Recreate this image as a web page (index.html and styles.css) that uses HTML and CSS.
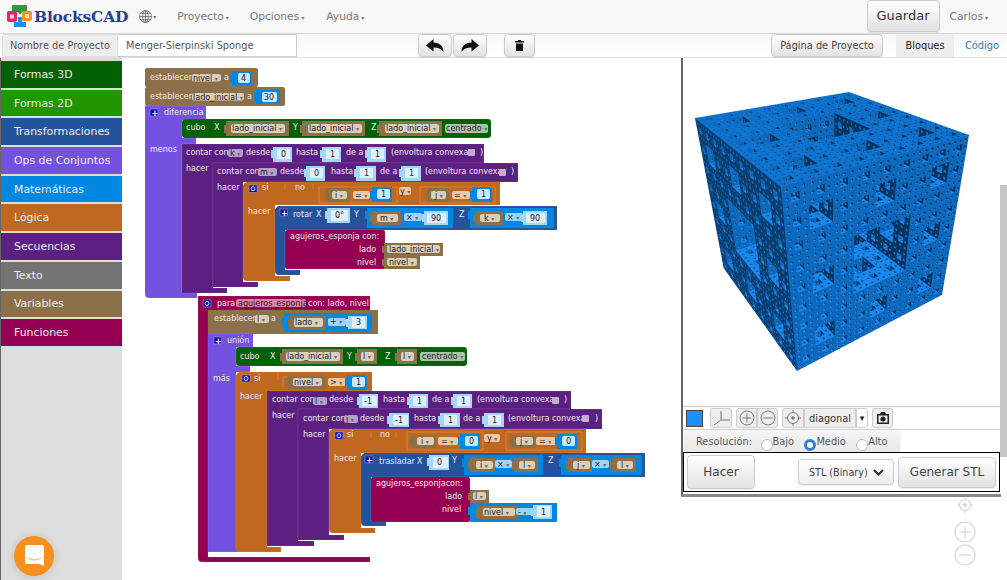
FILE: index.html
```html
<!DOCTYPE html>
<html lang="es">
<head>
<meta charset="utf-8">
<title>BlocksCAD</title>
<link rel="stylesheet" href="styles.css">
</head>
<body>
<div class="app">
  <header class="nav">
    <svg class="logo" width="27" height="24" viewBox="0 0 27 24">
      <path class="lg-g" d="M6 0H19a1 1 0 0 1 1 1V6a1 1 0 0 1-1 1H15L13 10 11 7H6a1 1 0 0 1-1-1V1a1 1 0 0 1 1-1Z"/>
      <path class="lg-b" d="M11 12h4v5h4v5H7v-5h4Z"/>
      <rect class="lg-p" x="0" y="6" width="10" height="11" rx="2"/>
      <rect class="lg-w" x="3" y="9.500" width="4" height="4"/>
      <rect class="lg-o" x="15" y="6" width="10" height="10" rx="2"/>
      <rect class="lg-w2" x="18" y="9" width="4" height="4"/>
    </svg>
    <span class="brand">BlocksCAD</span>
    <svg class="globe" width="13" height="13" viewBox="0 0 13 13">
      <circle cx="6.500" cy="6.500" r="6"/><ellipse cx="6.500" cy="6.500" rx="2.800" ry="6"/>
      <path d="M6.500 .5V12.500M.5 6.500H12.500M1.500 3.300H11.500M1.500 9.700H11.500"/>
    </svg>
    <span class="caret c-globe">▾</span>
    <span class="nav-link m-proy">Proyecto<span class="caret">▾</span></span>
    <span class="nav-link m-opc">Opciones<span class="caret">▾</span></span>
    <span class="nav-link m-ayu">Ayuda<span class="caret">▾</span></span>
    <button class="btn guardar">Guardar</button>
    <span class="nav-link m-car">Carlos<span class="caret">▾</span></span>
  </header>

  <div class="bar">
    <span class="addon">Nombre de Proyecto</span>
    <span class="name">Menger-Sierpinski Sponge</span>
    <button class="btn tool t-undo"><svg width="18" height="13" viewBox="0 0 18 13"><path d="M0 6.500 7.500 0V3.500C13.500 3.500 17.500 7 17.500 13 15.500 9.700 12 8.500 7.500 8.500V12.500Z"/></svg></button>
    <button class="btn tool t-redo"><svg class="flip" width="18" height="13" viewBox="0 0 18 13"><path d="M0 6.500 7.500 0V3.500C13.500 3.500 17.500 7 17.500 13 15.500 9.700 12 8.500 7.500 8.500V12.500Z"/></svg></button>
    <button class="btn tool t-trash"><svg width="9" height="11" viewBox="0 0 9 11"><path d="M3 0H6V1H9V2.500H0V1H3ZM1 3.500H8V11H1Z"/></svg></button>
    <button class="btn pagina">Página de Proyecto</button>
    <span class="tab active">Bloques</span>
    <span class="tab link">Código</span>
  </div>

  <main class="main">
    <nav class="toolbox">
      <div class="cat c3d">Formas 3D</div>
      <div class="cat c2d">Formas 2D</div>
      <div class="cat ctr">Transformaciones</div>
      <div class="cat cop">Ops de Conjuntos</div>
      <div class="cat cma">Matemáticas</div>
      <div class="cat clo">Lógica</div>
      <div class="cat cse">Secuencias</div>
      <div class="cat cte">Texto</div>
      <div class="cat cva">Variables</div>
      <div class="cat cfu">Funciones</div>
    </nav>

    <section class="workspace">
      <svg class="blocks" width="559" height="522" viewBox="122 58 559 522">
        <!-- top-level setters -->
        <rect class="fv" x="145" y="68" width="113" height="19" rx="2"/>
        <text class="t" x="150" y="80">establecer</text>
        <rect class="fd" x="192" y="74" width="29" height="7.500" rx="2"/><text class="k" x="193" y="80.500">nivel <tspan class="ar">▾</tspan></text>
        <text class="t" x="224" y="80">a</text>
        <rect class="fm" x="232" y="71" width="20" height="14"/><rect class="fn" x="238" y="73" width="12" height="10" rx="2"/><text class="k" x="241" y="81">4</text>

        <rect class="fv" x="145" y="87" width="140" height="19" rx="2"/>
        <text class="t" x="150" y="99">establecer</text>
        <rect class="fd" x="192" y="93" width="52" height="7.500" rx="2"/><text class="k" x="193" y="99.500">lado_inicial <tspan class="ar">▾</tspan></text>
        <text class="t" x="247" y="99">a</text>
        <rect class="fm" x="256" y="90" width="24" height="14"/><rect class="fn" x="262" y="92" width="15" height="10" rx="2"/><text class="k" x="264" y="100">30</text>

        <!-- diferencia -->
        <path class="fo" d="M145 106H206V120H182V138H196V144H182V293H197V298H149Q145 298 145 294Z"/>
        <rect class="ic" x="150" y="109" width="8" height="7"/><text class="ip" x="151.500" y="115.500">+</text>
        <text class="t" x="164" y="115">diferencia</text>
        <text class="t" x="150" y="152">menos</text>

        <rect class="f3" x="182" y="119" width="309" height="19" rx="3"/>
        <text class="t" x="186" y="130">cubo</text>
        <text class="t" x="214" y="130">X</text>
        <rect class="fv" x="226" y="121" width="63" height="15"/><rect class="fd" x="231" y="124" width="54" height="9" rx="2"/><text class="k" x="232" y="131">lado_inicial <tspan class="ar">▾</tspan></text>
        <text class="t" x="293" y="130">Y</text>
        <rect class="fv" x="302" y="121" width="63" height="15"/><rect class="fd" x="308" y="124" width="54" height="9" rx="2"/><text class="k" x="309" y="131">lado_inicial <tspan class="ar">▾</tspan></text>
        <text class="t" x="371" y="130">Z</text>
        <rect class="fv" x="379" y="121" width="63" height="15"/><rect class="fd" x="385" y="124" width="54" height="9" rx="2"/><text class="k" x="386" y="131">lado_inicial <tspan class="ar">▾</tspan></text>
        <rect class="fg" x="445" y="124" width="43" height="9" rx="2"/><text class="k" x="446" y="131">centrado <tspan class="ar">▾</tspan></text>

        <!-- contar k -->
        <path class="fs" d="M182 144H484V163H213V288H227V293H182Z"/>
        <text class="t" x="186" y="155">contar con</text>
        <rect class="fq" x="228" y="149" width="15" height="8" rx="2"/><text class="k" x="230" y="156">k <tspan class="ar">▾</tspan></text>
        <text class="t" x="246" y="155">desde</text>
        <rect class="fl" x="273" y="147" width="19" height="15"/><rect class="fw" x="277" y="149" width="13" height="10" rx="1"/><text class="k" x="281" y="157">0</text>
        <text class="t" x="296" y="155">hasta</text>
        <rect class="fl" x="322" y="147" width="19" height="15"/><rect class="fw" x="326" y="149" width="13" height="10" rx="1"/><text class="k" x="330" y="157">1</text>
        <text class="t" x="346" y="155">de a</text>
        <rect class="fl" x="367" y="147" width="19" height="15"/><rect class="fw" x="371" y="149" width="13" height="10" rx="1"/><text class="k" x="375" y="157">1</text>
        <text class="t" x="391" y="155">(envoltura convexa</text>
        <rect class="fc" x="468" y="149" width="7" height="7" rx="1"/><text class="t" x="480" y="155">)</text>
        <text class="t" x="186" y="171">hacer</text>

        <!-- contar m -->
        <path class="fs" d="M213 163H518V182H243V282H258V287H213Z"/>
        <text class="t" x="217" y="174">contar con</text>
        <rect class="fq" x="258" y="168" width="19" height="8" rx="2"/><text class="k" x="260" y="175">m <tspan class="ar">▾</tspan></text>
        <text class="t" x="280" y="174">desde</text>
        <rect class="fl" x="306" y="166" width="19" height="15"/><rect class="fw" x="310" y="168" width="13" height="10" rx="1"/><text class="k" x="314" y="176">0</text>
        <text class="t" x="331" y="174">hasta</text>
        <rect class="fl" x="356" y="166" width="20" height="15"/><rect class="fw" x="360" y="168" width="13" height="10" rx="1"/><text class="k" x="364" y="176">1</text>
        <text class="t" x="380" y="174">de a</text>
        <rect class="fl" x="401" y="166" width="20" height="15"/><rect class="fw" x="405" y="168" width="13" height="10" rx="1"/><text class="k" x="409" y="176">1</text>
        <text class="t" x="425" y="174">(envoltura convexa</text>
        <rect class="fc" x="499" y="169" width="7" height="7" rx="1"/><text class="t" x="511" y="174">)</text>
        <text class="t" x="217" y="190">hacer</text>

        <!-- si 1 -->
        <path class="fb" d="M246 182H500V205H275V276H290V281H247Q243 281 243 277V185Z"/>
        <rect class="ic" x="249" y="185" width="8" height="7.500"/><circle class="ig" cx="253" cy="188.700" r="2"/>
        <text class="t" x="262" y="190">si</text>
        <text class="t" x="295" y="190">no</text>
        <path class="ol" d="M285 184V189M313 184V189M319 203V187H397V203ZM420 203V187H495V203Z"/>
        <rect class="fv" x="327" y="188" width="23" height="14"/><rect class="fd" x="332" y="191" width="15" height="8" rx="2"/><text class="k" x="335" y="198">i <tspan class="ar">▾</tspan></text>
        <rect class="fe" x="353" y="191" width="17" height="8" rx="2"/><text class="k" x="355" y="198">= <tspan class="ar">▾</tspan></text>
        <rect class="fm" x="372" y="187" width="20" height="15"/><rect class="fn" x="377" y="189" width="13" height="10" rx="2"/><text class="k" x="381" y="197">1</text>
        <rect class="fe" x="399" y="187" width="12" height="8" rx="2"/><text class="k" x="400" y="194">y <tspan class="ar">▾</tspan></text>
        <rect class="fv" x="427" y="188" width="22" height="14"/><rect class="fd" x="431" y="191" width="15" height="8" rx="2"/><text class="k" x="435" y="198">j <tspan class="ar">▾</tspan></text>
        <rect class="fe" x="452" y="191" width="18" height="8" rx="2"/><text class="k" x="454" y="198">= <tspan class="ar">▾</tspan></text>
        <rect class="fm" x="472" y="187" width="20" height="15"/><rect class="fn" x="477" y="189" width="13" height="10" rx="2"/><text class="k" x="481" y="197">1</text>
        <text class="t" x="248" y="214">hacer</text>

        <!-- rotar -->
        <path class="fr" d="M278 206H557V230H285V270H300V275H279Q275 275 275 271V209Z"/>
        <rect class="ic" x="280" y="209" width="7.500" height="7"/><text class="ip" x="281" y="215.500">+</text>
        <text class="t" x="293" y="217">rotar</text>
        <text class="t" x="316" y="217">X</text>
        <rect class="fl" x="327" y="208" width="23" height="15"/><rect class="fw" x="331" y="210" width="17" height="11" rx="1"/><text class="k" x="335" y="218">0°</text>
        <text class="t" x="354" y="217">Y</text>
        <rect class="fm" x="367" y="208" width="86" height="20"/>
        <rect class="fv" x="372" y="211" width="29" height="14"/><rect class="fd" x="377" y="214" width="21" height="8" rx="2"/><text class="k" x="380" y="221">m <tspan class="ar">▾</tspan></text>
        <rect class="fi" x="404" y="213" width="18" height="8" rx="2"/><text class="k" x="406" y="220">× <tspan class="ar">▾</tspan></text>
        <rect class="fl" x="424" y="211" width="24" height="14"/><rect class="fw" x="427" y="213" width="19" height="10" rx="1"/><text class="k" x="431" y="221">90</text>
        <text class="t" x="459" y="217">Z</text>
        <rect class="fm" x="470" y="208" width="84" height="20"/>
        <rect class="fv" x="475" y="211" width="28" height="14"/><rect class="fd" x="480" y="214" width="20" height="8" rx="2"/><text class="k" x="484" y="221">k <tspan class="ar">▾</tspan></text>
        <rect class="fi" x="505" y="213" width="18" height="8" rx="2"/><text class="k" x="507" y="220">× <tspan class="ar">▾</tspan></text>
        <rect class="fl" x="523" y="211" width="24" height="14"/><rect class="fw" x="526" y="213" width="19" height="10" rx="1"/><text class="k" x="530" y="221">90</text>

        <!-- llamada 1 -->
        <rect class="ff" x="285" y="230" width="100" height="39" rx="2"/>
        <text class="t" x="290" y="239">agujeros_esponja con:</text>
        <text class="t" x="359" y="252">lado</text>
        <text class="t" x="357" y="265">nivel</text>
        <rect class="fv" x="384" y="243" width="59" height="13"/><rect class="fd" x="387" y="245" width="53" height="8" rx="2"/><text class="k" x="389" y="252">lado_inicial <tspan class="ar">▾</tspan></text>
        <rect class="fv" x="384" y="256" width="36" height="13"/><rect class="fd" x="387" y="258" width="30" height="8" rx="2"/><text class="k" x="389" y="265">nivel <tspan class="ar">▾</tspan></text>

        <!-- para -->
        <path class="ff" d="M198 296H370V310H208V557H370V562H202Q198 562 198 558Z"/>
        <rect class="ic" x="203" y="300" width="8" height="7"/><circle class="ig" cx="207" cy="303.500" r="2"/>
        <text class="t" x="217" y="306">para</text>
        <rect class="fh" x="236" y="299" width="70" height="8" rx="2"/><text class="k" x="238" y="306">agujeros_esponja</text>
        <text class="t" x="308" y="306">con: lado, nivel</text>

        <rect class="fv" x="208" y="310" width="170" height="24"/>
        <text class="t" x="214" y="321">establecer</text>
        <rect class="fd" x="255" y="315" width="14" height="8" rx="2"/><text class="k" x="257" y="322">l <tspan class="ar">▾</tspan></text>
        <text class="t" x="271" y="321">a</text>
        <rect class="fm" x="284" y="313" width="88" height="19"/>
        <rect class="fv" x="290" y="316" width="36" height="14"/><rect class="fd" x="294" y="318" width="29" height="9" rx="2"/><text class="k" x="295" y="325">lado <tspan class="ar">▾</tspan></text>
        <rect class="fi" x="328" y="318" width="18" height="8" rx="2"/><text class="k" x="330" y="324">+ <tspan class="ar">▾</tspan></text>
        <rect class="fl" x="348" y="316" width="19" height="13"/><rect class="fw" x="352" y="317" width="13" height="11" rx="1"/><text class="k" x="356" y="325">3</text>

        <!-- union -->
        <path class="fo" d="M208 334H253V347H236V366H250V372H236V547H253V552H208Z"/>
        <rect class="ic" x="214" y="337" width="7.500" height="7"/><text class="ip" x="215" y="343.500">+</text>
        <text class="t" x="227" y="343">unión</text>
        <text class="t" x="213" y="381">más</text>

        <rect class="f3" x="236" y="347" width="231" height="19" rx="3"/>
        <text class="t" x="240" y="359">cubo</text>
        <text class="t" x="270" y="359">X</text>
        <rect class="fv" x="282" y="349" width="61" height="15"/><rect class="fd" x="286" y="352" width="54" height="9" rx="2"/><text class="k" x="287" y="359">lado_inicial <tspan class="ar">▾</tspan></text>
        <text class="t" x="347" y="359">Y</text>
        <rect class="fv" x="357" y="349" width="20" height="15"/><rect class="fd" x="361" y="352" width="13" height="9" rx="2"/><text class="k" x="363" y="359">l <tspan class="ar">▾</tspan></text>
        <text class="t" x="385" y="359">Z</text>
        <rect class="fv" x="397" y="349" width="20" height="15"/><rect class="fd" x="401" y="352" width="13" height="9" rx="2"/><text class="k" x="403" y="359">l <tspan class="ar">▾</tspan></text>
        <rect class="fg" x="420" y="352" width="45" height="9" rx="2"/><text class="k" x="422" y="359">centrado <tspan class="ar">▾</tspan></text>

        <!-- si 2 -->
        <path class="fb" d="M239 372H372V392H267V547H281V552H240Q236 552 236 548V375Z"/>
        <rect class="ic" x="242" y="375" width="8" height="7"/><circle class="ig" cx="246" cy="378.500" r="2"/>
        <text class="t" x="254" y="381">si</text>
        <path class="ol" d="M278 374V380M283 388V377H287"/>
        <rect class="fv" x="288" y="375" width="37" height="14"/><rect class="fd" x="293" y="378" width="29" height="8" rx="2"/><text class="k" x="294" y="385">nivel <tspan class="ar">▾</tspan></text>
        <rect class="fe" x="328" y="378" width="18" height="8" rx="2"/><text class="k" x="330" y="385">&gt; <tspan class="ar">▾</tspan></text>
        <rect class="fm" x="347" y="375" width="20" height="15"/><rect class="fn" x="352" y="377" width="13" height="10" rx="2"/><text class="k" x="356" y="385">1</text>
        <text class="t" x="240" y="399">hacer</text>

        <!-- contar l -->
        <path class="fs" d="M267 391H571V409H298V541H314V546H267Z"/>
        <text class="t" x="272" y="402">contar con</text>
        <rect class="fq" x="313" y="397" width="14" height="8" rx="2"/><text class="k" x="315" y="404">l <tspan class="ar">▾</tspan></text>
        <text class="t" x="329" y="402">desde</text>
        <rect class="fl" x="359" y="394" width="19" height="14"/><rect class="fw" x="362" y="396" width="15" height="10" rx="1"/><text class="k" x="364" y="404">-1</text>
        <text class="t" x="383" y="402">hasta</text>
        <rect class="fl" x="409" y="394" width="19" height="14"/><rect class="fw" x="413" y="396" width="13" height="10" rx="1"/><text class="k" x="417" y="404">1</text>
        <text class="t" x="432" y="402">de a</text>
        <rect class="fl" x="453" y="394" width="19" height="14"/><rect class="fw" x="457" y="396" width="13" height="10" rx="1"/><text class="k" x="461" y="404">1</text>
        <text class="t" x="477" y="402">(envoltura convexa</text>
        <rect class="fc" x="552" y="397" width="7" height="7" rx="1"/><text class="t" x="564" y="402">)</text>
        <text class="t" x="272" y="418">hacer</text>

        <!-- contar j -->
        <path class="fs" d="M298 409H602V429H329V535H344V540H298Z"/>
        <text class="t" x="303" y="421">contar con</text>
        <rect class="fq" x="344" y="415" width="14" height="8" rx="2"/><text class="k" x="346" y="422">j <tspan class="ar">▾</tspan></text>
        <text class="t" x="360" y="421">desde</text>
        <rect class="fl" x="389" y="413" width="20" height="14"/><rect class="fw" x="393" y="415" width="15" height="10" rx="1"/><text class="k" x="395" y="423">-1</text>
        <text class="t" x="414" y="421">hasta</text>
        <rect class="fl" x="440" y="413" width="20" height="14"/><rect class="fw" x="444" y="415" width="13" height="10" rx="1"/><text class="k" x="448" y="423">1</text>
        <text class="t" x="463" y="421">de a</text>
        <rect class="fl" x="484" y="413" width="20" height="14"/><rect class="fw" x="488" y="415" width="13" height="10" rx="1"/><text class="k" x="492" y="423">1</text>
        <text class="t" x="508" y="421">(envoltura convexa</text>
        <rect class="fc" x="582" y="415" width="7" height="7" rx="1"/><text class="t" x="595" y="421">)</text>
        <text class="t" x="303" y="437">hacer</text>

        <!-- si 3 -->
        <path class="fb" d="M332 429H586V453H361V528H375V533H333Q329 533 329 529V432Z"/>
        <rect class="ic" x="335" y="432" width="8" height="7.500"/><circle class="ig" cx="339" cy="435.700" r="2"/>
        <text class="t" x="347" y="437">si</text>
        <text class="t" x="380" y="437">no</text>
        <path class="ol" d="M371 432V438M396 432V438M407 450V432H483V450ZM506 450V432H582V450Z"/>
        <rect class="fv" x="412" y="435" width="24" height="13"/><rect class="fd" x="417" y="437" width="17" height="8" rx="2"/><text class="k" x="421" y="444">i <tspan class="ar">▾</tspan></text>
        <rect class="fe" x="438" y="437" width="20" height="8" rx="2"/><text class="k" x="441" y="444">= <tspan class="ar">▾</tspan></text>
        <rect class="fm" x="460" y="434" width="20" height="15"/><rect class="fn" x="465" y="436" width="13" height="10" rx="2"/><text class="k" x="469" y="444">0</text>
        <rect class="fe" x="484" y="434" width="16" height="8" rx="2"/><text class="k" x="487" y="441">y <tspan class="ar">▾</tspan></text>
        <rect class="fv" x="511" y="435" width="24" height="13"/><rect class="fd" x="516" y="437" width="17" height="8" rx="2"/><text class="k" x="520" y="444">j <tspan class="ar">▾</tspan></text>
        <rect class="fe" x="536" y="437" width="20" height="8" rx="2"/><text class="k" x="539" y="444">= <tspan class="ar">▾</tspan></text>
        <rect class="fm" x="557" y="434" width="20" height="15"/><rect class="fn" x="562" y="436" width="13" height="10" rx="2"/><text class="k" x="566" y="444">0</text>
        <text class="t" x="334" y="461">hacer</text>

        <!-- trasladar -->
        <path class="fr" d="M364 453H645V477H371V521H386V526H365Q361 526 361 522V456Z"/>
        <rect class="ic" x="365" y="456" width="8" height="7"/><text class="ip" x="366" y="462.500">+</text>
        <text class="t" x="379" y="464">trasladar</text>
        <text class="t" x="417" y="464">X</text>
        <rect class="fl" x="429" y="455" width="20" height="15"/><rect class="fw" x="433" y="457" width="15" height="11" rx="1"/><text class="k" x="437" y="465">0</text>
        <text class="t" x="452" y="463">Y</text>
        <rect class="fm" x="464" y="455" width="79" height="20"/>
        <rect class="fv" x="470" y="458" width="25" height="14"/><rect class="fd" x="476" y="461" width="17" height="8" rx="2"/><text class="k" x="480" y="468">i <tspan class="ar">▾</tspan></text>
        <rect class="fi" x="495" y="460" width="17" height="8" rx="2"/><text class="k" x="497" y="467">× <tspan class="ar">▾</tspan></text>
        <rect class="fv" x="514" y="458" width="24" height="14"/><rect class="fd" x="519" y="461" width="16" height="8" rx="2"/><text class="k" x="523" y="468">l <tspan class="ar">▾</tspan></text>
        <text class="t" x="548" y="463">Z</text>
        <rect class="fm" x="561" y="455" width="81" height="20"/>
        <rect class="fv" x="568" y="458" width="24" height="14"/><rect class="fd" x="573" y="461" width="17" height="8" rx="2"/><text class="k" x="577" y="468">j <tspan class="ar">▾</tspan></text>
        <rect class="fi" x="592" y="460" width="17" height="8" rx="2"/><text class="k" x="594" y="467">× <tspan class="ar">▾</tspan></text>
        <rect class="fv" x="612" y="458" width="24" height="14"/><rect class="fd" x="617" y="461" width="16" height="8" rx="2"/><text class="k" x="621" y="468">l <tspan class="ar">▾</tspan></text>

        <!-- llamada 2 -->
        <rect class="ff" x="371" y="477" width="99" height="45" rx="2"/>
        <text class="t" x="376" y="486">agujeros_esponjacon:</text>
        <text class="t" x="445" y="499">lado</text>
        <text class="t" x="442" y="512">nivel</text>
        <rect class="fv" x="470" y="490" width="19" height="13"/><rect class="fd" x="473" y="492" width="13" height="8" rx="2"/><text class="k" x="475" y="499">l <tspan class="ar">▾</tspan></text>
        <rect class="fm" x="470" y="503" width="87" height="19"/>
        <rect class="fv" x="477" y="506" width="41" height="13"/><rect class="fd" x="483" y="508" width="32" height="8" rx="2"/><text class="k" x="484" y="515">nivel <tspan class="ar">▾</tspan></text>
        <rect class="fi" x="516" y="508" width="17" height="7" rx="2"/><text class="k" x="518" y="515">- <tspan class="ar">▾</tspan></text>
        <rect class="fl" x="533" y="505" width="19" height="14"/><rect class="fw" x="537" y="506" width="13" height="11" rx="1"/><text class="k" x="541" y="515">1</text>

        <!-- puzzle tabs on the value connections -->
        <path class="tl" d="M271 150h2v8h-2zM320 150h2v8h-2zM365 150h2v8h-2zM304 169h2v8h-2zM354 169h2v8h-2zM399 169h2v8h-2zM325 211h2v8h-2zM422 214h2v8h-2zM521 214h2v8h-2zM346 319h2v8h-2zM357 397h2v8h-2zM407 397h2v8h-2zM451 397h2v8h-2zM387 416h2v8h-2zM438 416h2v8h-2zM482 416h2v8h-2zM427 458h2v8h-2zM531 508h2v8h-2z"/>
        <path class="tm" d="M230 74h2v8h-2zM254 93h2v8h-2zM370 191h2v8h-2zM470 191h2v8h-2zM365 211h2v8h-2zM468 211h2v8h-2zM282 318h2v8h-2zM345 378h2v8h-2zM458 437h2v8h-2zM555 437h2v8h-2zM462 459h2v8h-2zM559 459h2v8h-2zM468 507h2v8h-2z"/>
        <path class="tv" d="M224 125h2v8h-2zM300 125h2v8h-2zM377 125h2v8h-2zM325 191h2v8h-2zM425 191h2v8h-2zM370 214h2v8h-2zM473 214h2v8h-2zM288 319h2v8h-2zM280 353h2v8h-2zM355 353h2v8h-2zM395 353h2v8h-2zM286 378h2v8h-2zM410 438h2v8h-2zM509 438h2v8h-2zM468 461h2v8h-2zM512 461h2v8h-2zM566 461h2v8h-2zM610 461h2v8h-2zM475 509h2v8h-2zM382 246h2v7h-2zM382 259h2v7h-2zM468 493h2v7h-2z"/>
      </svg>
    </section>

    <aside class="side">
      <div class="panel">
        <canvas id="sponge" class="view" width="317" height="348"></canvas>
        <div class="vtools">
          <span class="swatch"></span>
          <button class="vb axes"><svg width="20" height="17" viewBox="0 0 20 17"><path d="M10 1V10L3 15M10 10H19"/></svg></button>
          <button class="vb plus lj"><svg width="16" height="16" viewBox="0 0 16 16"><circle cx="8" cy="8" r="7"/><path d="M8 3.500V12.500M3.500 8H12.500"/></svg></button>
          <button class="vb plus rj"><svg width="16" height="16" viewBox="0 0 16 16"><circle cx="8" cy="8" r="7"/><path d="M3.500 8H12.500"/></svg></button>
          <button class="vb aim lj"><svg width="16" height="16" viewBox="0 0 16 16"><circle cx="8" cy="8" r="5.500"/><circle class="dot" cx="8" cy="8" r="1.800"/><path d="M8 0V2.500M8 13.500V16M0 8H2.500M13.500 8H16"/></svg></button>
          <button class="vb diag mj">diagonal</button>
          <button class="vb drop rj"><span class="caret dark">▾</span></button>
          <button class="vb cam"><svg width="14" height="14" viewBox="0 0 14 14"><path class="solid" d="M1 3H4L5 1H9L10 3H13V13H1ZM2.500 4.500V11.500H11.500V4.500Z"/><circle class="solid" cx="7" cy="8" r="2.600"/></svg></button>
        </div>
        <div class="res">
          <span class="res-l">Resolución:</span>
          <span class="radio"></span><span class="res-o o-b">Bajo</span>
          <span class="radio on"></span><span class="res-o o-m">Medio</span>
          <span class="radio"></span><span class="res-o">Alto</span>
        </div>
        <div class="actions">
          <button class="btn hacer">Hacer</button>
          <div class="btn select">STL (Binary)<svg width="11" height="7" viewBox="0 0 11 7"><path d="M1 1 5.500 5.500 10 1"/></svg></div>
          <button class="btn generar">Generar STL</button>
        </div>
      </div>
      <div class="scroll"></div>
      <div class="viewctl">
        <svg class="c-aim" width="16" height="16" viewBox="0 0 16 16"><circle cx="8" cy="8" r="5.500"/><circle class="dot" cx="8" cy="8" r="2"/><path d="M8 0V2.500M8 13.500V16M0 8H2.500M13.500 8H16"/></svg>
        <svg class="c-zo" width="22" height="22" viewBox="0 0 22 22"><circle cx="11" cy="11" r="10"/><path d="M5 11H17M11 5V17"/></svg>
        <svg class="c-zo2" width="22" height="22" viewBox="0 0 22 22"><circle cx="11" cy="11" r="10"/><path d="M5 11H17"/></svg>
      </div>
    </aside>
  </main>

  <div class="launcher">
    <svg width="19" height="22" viewBox="0 0 19 22"><path class="chat" d="M2 0H17a2 2 0 0 1 2 2V21L14 19H2a2 2 0 0 1-2-2V2a2 2 0 0 1 2-2Z"/><path class="smile" d="M3 13Q9.500 17 16 13"/></svg>
  </div>
</div>
<script src="sponge.js"></script>
</body>
</html>
```

FILE: styles.css
```css
* { box-sizing: border-box; }
html, body { margin: 0; padding: 0; }
body { font-family: "DejaVu Sans", sans-serif; background: #fff; }
.app { position: relative; width: 1007px; height: 580px; overflow: hidden; display: flex; flex-direction: column; }

.nav { height: 34px; flex: none; display: flex; align-items: center; background: #f8f8f8; border-bottom: 1px solid #d8d8d8; }
.logo { margin: 0 0 0 7px; flex: none; }
.lg-g { fill: #2f9a3c; } .lg-b { fill: #1e90e6; } .lg-p { fill: #e6246e; } .lg-o { fill: #f7941e; }
.lg-w { fill: #fbd3e2; } .lg-w2 { fill: #fde0b8; }
.brand { font-family: "DejaVu Serif", serif; font-weight: 700; font-size: 15.500px; color: #26408f; margin-left: 0; letter-spacing: -.2px; }
.globe { margin-left: 11px; flex: none; }
.globe circle, .globe ellipse, .globe path { fill: none; stroke: #666; stroke-width: .8; }
.caret { font-size: 6px; margin-left: 2px; color: #777; }
.caret.dark { color: #222; font-size: 9px; margin: 0; }
.c-globe { margin-left: 1px; }
.nav-link { font-size: 10.700px; color: #777; }
.m-proy { margin-left: 21px; } .m-opc { margin-left: 21px; } .m-ayu { margin-left: 22px; }
.m-car { margin-left: 10px; margin-right: 19px; }
.btn { font-family: inherit; background: linear-gradient(#fff, #e2e2e2); border: 1px solid #ccc; border-radius: 4px; color: #333; padding: 0; box-shadow: 0 1px 1px rgba(0,0,0,.08); }
.guardar { width: 73px; height: 32px; margin: -2px 0 0 auto; font-size: 13px; }

.bar { height: 24px; flex: none; display: flex; align-items: stretch; background: linear-gradient(#f8f8f8, #fff); border-bottom: 1px solid #ddd; font-size: 10px; color: #555; padding-left: 2px; }
.addon { width: 116px; background: #eee; border: 1px solid #ddd; border-radius: 3px 0 0 3px; display: flex; align-items: center; padding-left: 7px; font-size: 9.800px; color: #555; }
.name { width: 179px; background: #fff; border: 1px solid #ccc; border-left: 0; display: flex; align-items: center; padding-left: 8px; font-size: 9.800px; color: #555; }
.tool { display: flex; align-items: center; justify-content: center; height: 23px; }
.tool path { fill: #111; }
.t-undo { width: 34px; margin-left: 121px; }
.t-redo { width: 34px; margin-left: 1px; }
.t-trash { width: 31px; margin-left: 17px; }
.flip { transform: scaleX(-1); }
.pagina { width: 112px; margin-left: 236px; height: 23px; font-size: 9.800px; color: #444; }
.tab { display: flex; align-items: center; justify-content: center; font-size: 9.800px; height: 23px; }
.tab.active { width: 58px; margin-left: 13px; background: #eee; color: #222; }
.tab.link { width: 46px; margin-left: 5px; color: #337ab7; }

.main { flex: 1; min-height: 0; display: flex; }
.toolbox { width: 122px; flex: none; background: #ddd; border-left: 1px solid #666; padding-top: 3px; display: flex; flex-direction: column; gap: 2px; }
.cat { height: 26.700px; display: flex; align-items: center; padding-left: 13px; color: #eee; font-size: 10.900px; }
.c3d { background: #006205; } .c2d { background: #219600; } .ctr { background: #24529b; } .cop { background: #7452e0; }
.cma { background: #0087e0; } .clo { background: #c06820; } .cse { background: #5b2082; } .cte { background: #737373; }
.cva { background: #8b7049; } .cfu { background: #950052; }

.workspace { width: 559px; flex: none; background: #fff; position: relative; }
.blocks { display: block; overflow: visible; font-family: "DejaVu Sans", sans-serif; }
.t { font-size: 8px; fill: #f0e8f0; }
.k { font-size: 8px; fill: #222; }
.ar { font-size: 6px; fill: #666; }
.ip { font-size: 8px; font-weight: 700; fill: #fff; }
.ic { fill: #10109a; stroke: #a8a8ee; stroke-width: .5; }
.ig { fill: none; stroke: #e0e0ff; stroke-width: 1; }
.ol { fill: none; stroke: #d9974f; stroke-width: .6; }
.fv { fill: #8b7049; } .fo { fill: #7452e0; } .f3 { fill: #006205; } .fs { fill: #5b2082; } .fb { fill: #c06820; }
.fr { fill: #24529b; } .ff { fill: #950052; } .fm { fill: #0087e0; }
.f3, .fs, .fb, .fr, .ff, .fo { stroke: rgba(255,255,255,.12); stroke-width: .7; }
.fd { fill: #d9cdbb; } .fn { fill: #cfe7fa; } .fg { fill: #a6c5a8; } .fq { fill: #b69fc8; }
.fl { fill: #a6d6f6; } .fw { fill: #dff0fc; } .fc { fill: #c3aed0; } .fe { fill: #eec7a0; } .fi { fill: #9ed3f5; } .fh { fill: #cc88ac; }
.tl { fill: #a6d6f6; } .tm { fill: #0087e0; } .tv { fill: #8b7049; }

.side { position: relative; width: 326px; flex: none; display: flex; flex-direction: column; }
.panel { width: 320px; border-left: 2px solid #666; border-bottom: 3px solid #888; display: flex; flex-direction: column; }
.view { display: block; width: 317px; height: 348px; }
.vtools { height: 24px; border-top: 1px solid #ccc; border-bottom: 1px solid #ccc; display: flex; align-items: center; padding-left: 3px; }
.swatch { width: 17px; height: 17px; background: #1b8ffa; border: 1px solid #444; }
.vb { height: 20px; padding: 0; background: #eee; border: 1px solid #ccc; border-radius: 3px; display: flex; align-items: center; justify-content: center; font-family: inherit; font-size: 9.800px; color: #333; }
.vb svg { fill: none; stroke: #777; stroke-width: 1; }
.vb .dot { fill: #777; stroke: none; }
.vb .solid { fill: #222; stroke: none; }
.axes { width: 22px; margin-left: 7px; }
.plus { width: 21px; }
.lj { border-radius: 3px 0 0 3px; } .rj { border-radius: 0 3px 3px 0; } .mj { border-radius: 0; }
.plus.lj { margin-left: 4px; }
.aim { width: 22px; margin-left: 4px; }
.diag { width: 52px; }
.drop { width: 12px; background: #fff; }
.cam { width: 21px; margin-left: 4px; }
.res { width: 216px; height: 21px; margin: 1px 0 0 1px; background: linear-gradient(#f4f4f4, #e9e9e9); border-radius: 3px 3px 0 0; box-shadow: 0 0 1px rgba(0,0,0,.3); display: flex; align-items: flex-start; padding: 5px 0 0 12px; font-size: 9.800px; color: #555; position: relative; z-index: 1; }
.res-l { width: 65px; }
.radio { width: 12px; height: 12px; border-radius: 50%; background: #fff; border: 1px solid #bbb; margin-top: 3px; flex: none; }
.radio.on { background: #fff; border: 3.500px solid #337ecb; }
.res-o { width: 32px; }
.res-o.o-m { width: 40px; }
.actions { height: 40px; width: 317px; margin-bottom: 2px; border: 1px solid #000; display: flex; align-items: center; padding-left: 3px; }
.hacer { width: 68px; height: 34px; font-size: 12px; color: #444; }
.select { width: 96px; height: 26px; margin-left: 43px; display: flex; align-items: center; justify-content: space-between; padding: 0 9px 0 10px; font-size: 9.600px; color: #444; background: linear-gradient(#fff, #eee); }
.select svg { fill: none; stroke: #333; stroke-width: 2; }
.generar { width: 98px; height: 31px; margin-left: 4px; font-size: 12px; color: #444; }
.scroll { position: absolute; right: 0; top: 127px; width: 7px; height: 272px; background: #c6c6c6; }
.viewctl { display: flex; flex-direction: column; align-items: center; width: 22px; margin-left: 273px; }
.viewctl svg { fill: none; stroke: #d4d4d4; stroke-width: 1.200; display: block; }
.viewctl .dot { fill: #d4d4d4; stroke: none; }
.c-zo { margin-top: 8px; }
.c-zo2 { margin-top: 1px; }

.launcher { position: absolute; left: 14px; top: 536px; width: 40px; height: 40px; border-radius: 50%; background: #f7901e; box-shadow: 0 1px 10px rgba(0,0,0,.12); display: flex; align-items: center; justify-content: center; }
.chat { fill: #fff; }
.smile { fill: none; stroke: #f7a860; stroke-width: 1; }
```

FILE: sponge.js
```js
// Renders the level-4 Menger sponge preview by casting rays through a voxel grid.
(function () {
  var canvas = document.getElementById('sponge');
  var ctx = canvas.getContext('2d');
  var W = canvas.width, H = canvas.height, OX = 683, OY = 58;

  // Projected corners of the cube on the page.
  var N = [781, 187], R = [969, 135], F = [849, 92], L = [695, 118], B = [797, 371], RB = [942, 296];

  var dx1 = R[0] - F[0], dx2 = L[0] - F[0], sx = N[0] - R[0] + F[0] - L[0];
  var dy1 = R[1] - F[1], dy2 = L[1] - F[1], sy = N[1] - R[1] + F[1] - L[1];
  var den = dx1 * dy2 - dx2 * dy1;
  var g = (sx * dy2 - dx2 * sy) / den, h = (dx1 * sy - sx * dy1) / den;
  var A = [R[0] - N[0] + g * R[0], R[1] - N[1] + g * R[1], g];
  var C0 = [L[0] - N[0] + h * L[0], L[1] - N[1] + h * L[1], h];
  var O = [N[0], N[1], 1];
  var t = (A[0] - A[2] * RB[0]) / (RB[0] - B[0]);
  var D = [t * B[0] - O[0], t * B[1] - O[1], t - 1];

  // Columns of M are the axes a (to R), b (to L), c (down).
  var m = [[A[0], C0[0], D[0]], [A[1], C0[1], D[1]], [A[2], C0[2], D[2]]];
  function inv3(a) {
    var c00 = a[1][1] * a[2][2] - a[1][2] * a[2][1], c01 = a[1][2] * a[2][0] - a[1][0] * a[2][2], c02 = a[1][0] * a[2][1] - a[1][1] * a[2][0];
    var d = a[0][0] * c00 + a[0][1] * c01 + a[0][2] * c02;
    return [
      [c00 / d, (a[0][2] * a[2][1] - a[0][1] * a[2][2]) / d, (a[0][1] * a[1][2] - a[0][2] * a[1][1]) / d],
      [c01 / d, (a[0][0] * a[2][2] - a[0][2] * a[2][0]) / d, (a[0][2] * a[1][0] - a[0][0] * a[1][2]) / d],
      [c02 / d, (a[0][1] * a[2][0] - a[0][0] * a[2][1]) / d, (a[0][0] * a[1][1] - a[0][1] * a[1][0]) / d]
    ];
  }
  var mi = inv3(m);
  function mul(v) {
    return [mi[0][0] * v[0] + mi[0][1] * v[1] + mi[0][2] * v[2],
            mi[1][0] * v[0] + mi[1][1] * v[1] + mi[1][2] * v[2],
            mi[2][0] * v[0] + mi[2][1] * v[1] + mi[2][2] * v[2]];
  }
  var cam = mul(O); cam = [-cam[0], -cam[1], -cam[2]];

  // Voxel grid.
  var S = 81, solid = new Uint8Array(S * S * S);
  for (var z = 0; z < S; z++) for (var y = 0; y < S; y++) for (var x = 0; x < S; x++) {
    var a = x, b = y, c = z, open = false;
    for (var l = 0; l < 4; l++) {
      var n = (a % 3 === 1) + (b % 3 === 1) + (c % 3 === 1);
      if (n >= 2) { open = true; break; }
      a = (a / 3) | 0; b = (b / 3) | 0; c = (c / 3) | 0;
    }
    solid[x + S * (y + S * z)] = open ? 0 : 1;
  }

  // axis 0: left face, axis 1: right face, axis 2: up-facing.
  var SS = 3, out = [0, 0, 0, 0];
  function cast(u, v) {
    var d = mul([u, v, 1]);
    var tn = -Infinity, tf = Infinity, axis = 0, i;
    for (i = 0; i < 3; i++) {
      if (Math.abs(d[i]) < 1e-12) { if (cam[i] < 0 || cam[i] > 1) return false; continue; }
      var t0 = (0 - cam[i]) / d[i], t1 = (1 - cam[i]) / d[i];
      if (t0 > t1) { var tt = t0; t0 = t1; t1 = tt; }
      if (t0 > tn) { tn = t0; axis = i; }
      if (t1 < tf) tf = t1;
    }
    if (tf <= tn || tf < 0) return false;
    var p = [0, 0, 0], cell = [0, 0, 0], st = [0, 0, 0], td = [0, 0, 0], tm = [0, 0, 0];
    for (i = 0; i < 3; i++) {
      p[i] = (cam[i] + d[i] * (tn + 1e-9)) * S;
      cell[i] = Math.min(S - 1, Math.max(0, Math.floor(p[i])));
      var di = d[i];
      st[i] = di > 0 ? 1 : -1;
      td[i] = di === 0 ? Infinity : Math.abs(1 / (di * S));
      var bd = di > 0 ? cell[i] + 1 : cell[i];
      tm[i] = di === 0 ? Infinity : (bd / S - cam[i]) / di;
    }
    var depth = tn;
    for (var k = 0; k < 300; k++) {
      if (solid[cell[0] + S * (cell[1] + S * cell[2])]) {
        var outer = k === 0;
        if (axis === 2) { if (outer) { out[0] = 15; out[1] = 116; out[2] = 208; } else { out[0] = 24; out[1] = 136; out[2] = 238; } }
        else if (axis === 1) { out[0] = 14; out[1] = 104; out[2] = 188; }
        else { if (outer) { out[0] = 10; out[1] = 62; out[2] = 110; } else { out[0] = 6; out[1] = 52; out[2] = 94; } }
        return true;
      }
      axis = tm[0] < tm[1] ? (tm[0] < tm[2] ? 0 : 2) : (tm[1] < tm[2] ? 1 : 2);
      depth = tm[axis];
      if (depth > tf) return false;
      cell[axis] += st[axis];
      if (cell[axis] < 0 || cell[axis] >= S) return false;
      tm[axis] += td[axis];
    }
    return false;
  }

  var img = ctx.createImageData(W, H), px = img.data;
  for (var py = 0; py < H; py++) for (var qx = 0; qx < W; qx++) {
    var r = 0, gr = 0, bl = 0, hits = 0;
    for (var j = 0; j < SS; j++) for (var q = 0; q < SS; q++) {
      if (cast(OX + qx + (q + .5) / SS, OY + py + (j + .5) / SS)) { r += out[0]; gr += out[1]; bl += out[2]; hits++; }
    }
    var o = (qx + py * W) * 4;
    if (hits) {
      px[o] = r / hits; px[o + 1] = gr / hits; px[o + 2] = bl / hits; px[o + 3] = 255 * hits / (SS * SS);
    }
  }
  ctx.putImageData(img, 0, 0);
})();
```
